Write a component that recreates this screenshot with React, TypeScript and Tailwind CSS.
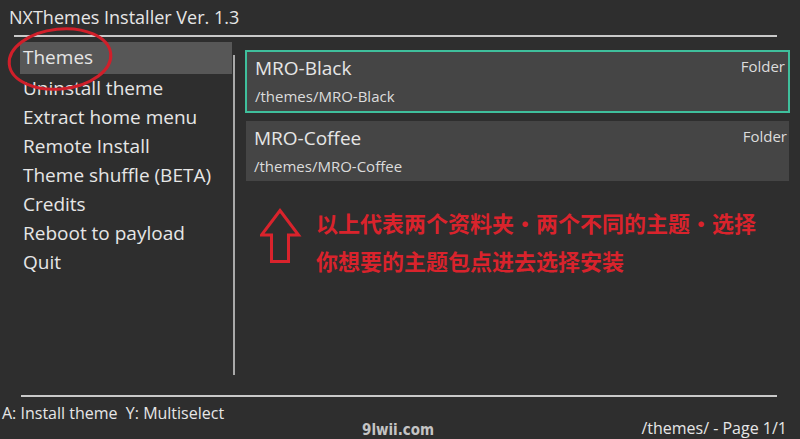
const MENU = [
  'Themes',
  'Uninstall theme',
  'Extract home menu',
  'Remote Install',
  'Theme shuffle (BETA)',
  'Credits',
  'Reboot to payload',
  'Quit',
]

const ENTRIES = [
  { name: 'MRO-Black', path: '/themes/MRO-Black', selected: true },
  { name: 'MRO-Coffee', path: '/themes/MRO-Coffee', selected: false },
]

function UpArrow() {
  return (
    <svg width="42" height="56" viewBox="0 0 42 56" className="shrink-0">
      <path
        d="M20 2.5 L38.5 27 L28.5 27 L28.5 53.5 L11.5 53.5 L11.5 27 L1.5 27 Z"
        fill="none"
        stroke="#d9232c"
        strokeWidth="3"
      />
    </svg>
  )
}

export default function App() {
  return (
    <div
      className="relative w-[800px] h-[439px] overflow-hidden bg-[#2e2e2e] text-[#e6e6e6] flex flex-col"
      style={{ fontFamily: '"Open Sans", "Noto Sans", sans-serif' }}
    >
      <header className="h-[35px] pl-[9px] flex items-center">
        <span className="text-[18px] leading-none">NXThemes Installer Ver. 1.3</span>
      </header>
      <div className="ml-[14px] w-[763px] h-[2px] bg-[#c9c9c9]" />

      <div className="flex h-[361px]">
        <nav className="w-[232px] pl-[20px] pt-[5px] flex flex-col">
          {MENU.map((item, i) => (
            <div
              key={item}
              className={
                i === 0
                  ? 'h-[32px] pl-[3px] flex items-center bg-[#575757] text-[19px] whitespace-nowrap'
                  : 'h-[29px] pl-[3px] flex items-center text-[19px] whitespace-nowrap'
              }
            >
              {item}
            </div>
          ))}
        </nav>

        <div className="mt-[18px] w-[2px] h-[320px] bg-[#a9a9a9] ml-[1px]" />

        <main className="flex-1 pl-[10px] pr-[10px] pt-[13px] flex flex-col">
          <div className="flex flex-col gap-[8px]">
            {ENTRIES.map((e) => (
              <div
                key={e.name}
                className={
                  e.selected
                    ? 'h-[63px] border-2 border-[#3fbf9c] bg-[#454545] pl-[8px] pr-[3px] pt-[2px] flex justify-between'
                    : 'h-[60px] mx-[1px] bg-[#454545] pl-[8px] pr-[2px] pt-[3px] flex justify-between'
                }
              >
                <div className="flex flex-col">
                  <span className="text-[19px] leading-[28px]">{e.name}</span>
                  <span className="text-[15px] leading-[22px] mt-[3px] text-[#dcdcdc]">{e.path}</span>
                </div>
                <span className="text-[15px] leading-[24px] text-[#dcdcdc]">Folder</span>
              </div>
            ))}
          </div>

          <div className="mt-[27px] flex items-start gap-[14px] pl-[15px]">
            <UpArrow />
            <div
              className="flex flex-col text-[22px] leading-[38px] font-bold text-[#d9232c] -mt-[5px] whitespace-nowrap"
              style={{ fontFamily: '"Noto Sans CJK SC", sans-serif' }}
            >
              <span>以上代表两个资料夹・两个不同的主题・选择</span>
              <span>你想要的主题包点进去选择安装</span>
            </div>
          </div>
        </main>
      </div>

      <div className="ml-[21px] w-[756px] h-[2px] bg-[#c9c9c9]" />
      <footer className="flex-1 flex justify-between pl-[2px] pr-[13px]">
        <span className="text-[16px] leading-[28px] mt-[2px] whitespace-nowrap">
          A: Install theme&nbsp;&nbsp;Y: Multiselect
        </span>
        <span className="text-[16px] leading-[22px] mt-[20px] whitespace-nowrap">/themes/ - Page 1/1</span>
      </footer>

      <svg
        className="absolute left-[4px] top-[24px] pointer-events-none"
        width="112"
        height="72"
        viewBox="0 0 112 72"
      >
        <ellipse
          cx="56"
          cy="35"
          rx="51"
          ry="30"
          transform="rotate(-6 56 35)"
          fill="none"
          stroke="#d01f2a"
          strokeWidth="3"
        />
      </svg>

      <span
        className="absolute left-[362px] top-[422px] text-[15px] leading-[16px] font-black text-[#c4c4c4]"
        style={{ fontFamily: '"DejaVu Sans Condensed", "Liberation Sans", sans-serif' }}
      >
        9lwii.com
      </span>
    </div>
  )
}
